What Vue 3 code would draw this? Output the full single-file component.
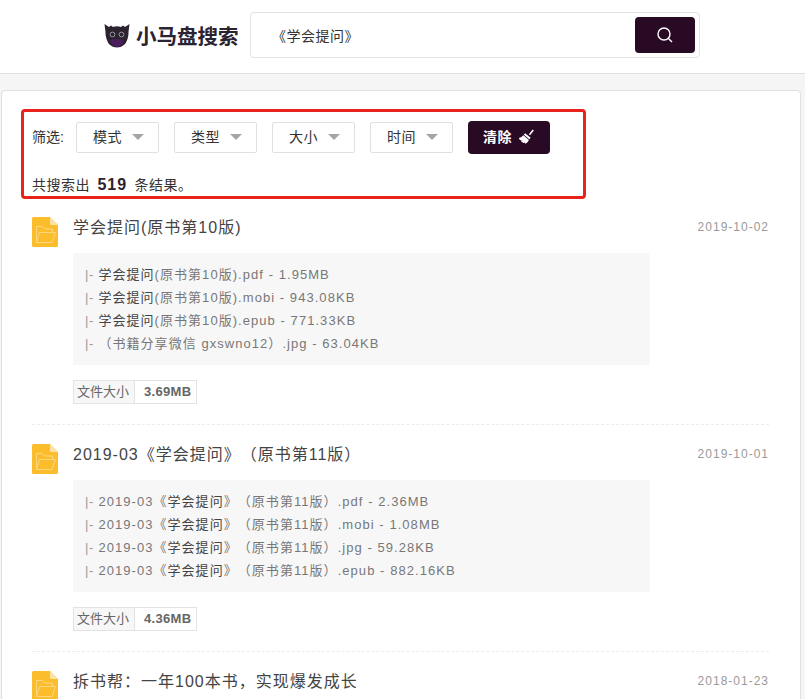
<script setup>
const filters = ['模式', '类型', '大小', '时间'];

const results = [
  {
    title: '学会提问(原书第10版)',
    date: '2019-10-02',
    size: '3.69MB',
    files: [
      { mark: '学会提问', rest: '(原书第10版).pdf - 1.95MB' },
      { mark: '学会提问', rest: '(原书第10版).mobi - 943.08KB' },
      { mark: '学会提问', rest: '(原书第10版).epub - 771.33KB' },
      { mark: '', rest: '（书籍分享微信 gxswno12）.jpg - 63.04KB' }
    ]
  },
  {
    title: '2019-03《学会提问》（原书第11版）',
    date: '2019-10-01',
    size: '4.36MB',
    files: [
      { pre: '2019-03《', mark: '学会提问', rest: '》（原书第11版）.pdf - 2.36MB' },
      { pre: '2019-03《', mark: '学会提问', rest: '》（原书第11版）.mobi - 1.08MB' },
      { pre: '2019-03《', mark: '学会提问', rest: '》（原书第11版）.jpg - 59.28KB' },
      { pre: '2019-03《', mark: '学会提问', rest: '》（原书第11版）.epub - 882.16KB' }
    ]
  },
  {
    title: '拆书帮：一年100本书，实现爆发成长',
    date: '2018-01-23',
    size: '',
    files: []
  }
];
</script>

<template>
  <div class="page">
    <header class="topbar">
      <div class="logo">
        <svg class="logo-icon" viewBox="0 0 26 26" width="26" height="26">
          <path d="M0.5 2 L5 5 L7 3.5 L9 5 Q11 4.3 13 4.3 Q15 4.3 17 5 L19 3.5 L21 5 L25.5 2 L24.5 10 Q24.8 13 23.5 17 Q21 25.5 13 25.5 Q5 25.5 2.5 17 Q1.2 13 1.5 10 Z" fill="#2b2330" />
          <path d="M6 18.5 Q13 15 20 18.5 Q18 25 13 25 Q8 25 6 18.5 Z" fill="#4a1f5c" />
          <circle cx="8.5" cy="12.5" r="2.4" fill="#2b2330" stroke="#9a959e" stroke-width="1" />
          <circle cx="17.5" cy="12.5" r="2.4" fill="#2b2330" stroke="#9a959e" stroke-width="1" />
        </svg>
        <span class="logo-text">小马盘搜索</span>
      </div>
      <div class="search">
        <span class="search-text">《学会提问》</span>
        <button class="search-btn">
          <svg viewBox="0 0 18 18" width="18" height="18" fill="none" stroke="#fff" stroke-width="1.4">
            <circle cx="8" cy="8" r="6" />
            <path d="M12.4 12.4 L16 16" />
          </svg>
        </button>
      </div>
    </header>

    <main class="card">
      <section class="filter-box">
        <div class="filter-row">
          <span class="filter-label">筛选:</span>
          <div v-for="f in filters" :key="f" class="select">
            {{ f }}<i class="caret"></i>
          </div>
          <button class="clear-btn">
            清除
            <svg viewBox="0 0 18 18" width="17" height="17" fill="#fff">
              <path d="M11.5 6.5 L15.5 1.5 L16.8 2.6 L12.8 7.6 Z" />
              <path d="M7.6 5.6 L13.4 10.2 L12 11.8 L6.2 7.2 Z" />
              <path d="M5.6 7.8 L11.6 12.6 Q10.4 15.4 8 16.8 L6.6 15 L6.4 16.2 Q4 15.2 2.6 13.6 L4.6 12.6 L2 12.6 Q1.2 11.6 1 10.6 Q4 10 5.6 7.8 Z" />
            </svg>
          </button>
        </div>
        <p class="count">共搜索出 <b>519</b> 条结果。</p>
      </section>

      <article v-for="r in results" :key="r.title" class="result">
        <svg class="folder" viewBox="0 0 26 30" width="26" height="30">
          <path d="M0 1.5 Q0 0 1.5 0 L18 0 L26 8 L26 28.5 Q26 30 24.5 30 L1.5 30 Q0 30 0 28.5 Z" fill="#fbbd2c" />
          <path d="M18 0 L26 8 L19.5 8 Q18 8 18 6.5 Z" fill="#fde3a3" />
          <path d="M4.5 25 L4.5 9.5 L10.5 9.5 L12.5 12 L20.5 12 L20.5 15" fill="none" stroke="#fdd77e" stroke-width="1" />
          <path d="M4.5 25.5 L7.5 15.5 L23.5 15.5 L20 25.5 Z" fill="none" stroke="#fdd77e" stroke-width="1" />
        </svg>
        <div class="result-body">
          <div class="result-head">
            <h3 class="result-title">{{ r.title }}</h3>
            <span class="result-date">{{ r.date }}</span>
          </div>
          <ul v-if="r.files.length" class="files">
            <li v-for="(f, i) in r.files" :key="i">
              <span class="tree">|-</span>
              {{ f.pre }}<span class="mark">{{ f.mark }}</span>{{ f.rest }}
            </li>
          </ul>
          <div v-if="r.size" class="size-tag">
            <span class="size-label">文件大小</span>
            <b class="size-value">{{ r.size }}</b>
          </div>
        </div>
      </article>
    </main>
  </div>
</template>

<style>
html,
body {
  margin: 0;
  height: 100%;
  overflow: hidden;
  background: #f5f5f5;
}
</style>

<style scoped>
.page {
  font-family: "Liberation Sans", "Noto Sans CJK SC", sans-serif;
  color: #333;
  height: 699px;
  overflow: hidden;
  text-spacing-trim: space-all;
}
.topbar {
  height: 74px;
  box-sizing: border-box;
  background: #fff;
  border-bottom: 1px solid #dfdfdf;
  display: flex;
  align-items: flex-start;
  padding: 12px 0 0 104px;
}
.logo {
  display: flex;
  align-items: center;
  gap: 6px;
  width: 146px;
  height: 46px;
}
.logo-text {
  font-size: 20.5px;
  font-weight: 700;
  color: #2b2330;
  white-space: nowrap;
}
.search {
  width: 450px;
  height: 46px;
  box-sizing: border-box;
  border: 1px solid #e3e3e3;
  border-radius: 4px;
  display: flex;
  align-items: center;
  justify-content: space-between;
  padding: 0 4px 0 21px;
}
.search-text {
  font-size: 14px;
  letter-spacing: 0.5px;
  color: #333;
}
.search-btn {
  width: 60px;
  height: 36px;
  border: 0;
  border-radius: 4px;
  background: #280a24;
  display: flex;
  align-items: center;
  justify-content: center;
  padding: 0;
}
.card {
  margin: 16px 0 0 1px;
  width: 800px;
  height: 640px;
  box-sizing: border-box;
  background: #fff;
  border: 1px solid #e0e0e0;
  border-radius: 4px;
  padding: 18px 31px 0 19px;
}
.filter-box {
  width: 565px;
  height: 90px;
  box-sizing: border-box;
  border: 3px solid #e8231c;
  border-radius: 4px;
  padding: 9px 0 0 8px;
  margin-bottom: 12px;
}
.filter-row {
  display: flex;
  align-items: center;
  height: 33px;
}
.filter-label {
  font-size: 14px;
  width: 44px;
  padding-bottom: 3px;
}
.select {
  width: 83px;
  height: 31px;
  box-sizing: border-box;
  border: 1px solid #e0e0e0;
  border-radius: 2px;
  margin-right: 15px;
  font-size: 14px;
  letter-spacing: 0.5px;
  display: flex;
  align-items: center;
  padding-left: 16px;
  line-height: 27px;
  padding-bottom: 1px;
}
.caret {
  width: 0;
  height: 0;
  border-left: 6px solid transparent;
  border-right: 6px solid transparent;
  border-top: 6px solid #a5a5a5;
  margin-left: 10px;
}
.clear-btn {
  width: 82px;
  height: 33px;
  border: 0;
  border-radius: 4px;
  background: #280a24;
  color: #fff;
  font-family: inherit;
  font-size: 14px;
  font-weight: 700;
  letter-spacing: 0.5px;
  display: flex;
  align-items: center;
  justify-content: center;
  gap: 6px;
  padding: 0 0 3px;
}
.count {
  margin: 21px 0 0;
  font-size: 14px;
  line-height: 20px;
  letter-spacing: 0.5px;
}
.count b {
  font-size: 16px;
  margin: 0 3px;
  color: #2b2330;
  letter-spacing: 1px;
}
.result {
  display: flex;
  gap: 15px;
  margin-left: 11px;
  padding-bottom: 20px;
  margin-bottom: 13px;
  border-bottom: 1px dashed #ececec;
}
.folder {
  flex: none;
  margin-top: 6px;
}
.result-body {
  flex: 1;
  min-width: 0;
}
.result-head {
  display: flex;
  justify-content: space-between;
  align-items: center;
  height: 30px;
}
.result-title {
  margin: 0;
  font-size: 16px;
  font-weight: 400;
  color: #444;
  letter-spacing: 1px;
}
.result-date {
  font-size: 12px;
  color: #999;
  letter-spacing: 1px;
  padding-top: 2px;
}
.files {
  list-style: none;
  margin: 12px 0 15px;
  padding: 10px 12px 10px 12px;
  width: 577px;
  height: 112px;
  box-sizing: border-box;
  background: #f7f7f7;
}
.files li {
  font-size: 13px;
  line-height: 23px;
  color: #777;
  letter-spacing: 1.05px;
  white-space: nowrap;
}
.tree {
  color: #999;
  letter-spacing: 0.5px;
}
.mark {
  color: #444;
}
.size-tag {
  display: inline-flex;
  height: 24px;
  box-sizing: border-box;
  border: 1px solid #e3e3e3;
  font-size: 13px;
  line-height: 22px;
  color: #666;
}
.size-label {
  padding: 0 5px 0 3px;
  background: #f7f7f7;
  border-right: 1px solid #e3e3e3;
}
.size-value {
  padding: 0 5px 0 9px;
  color: #666;
  letter-spacing: 0.3px;
}
</style>
